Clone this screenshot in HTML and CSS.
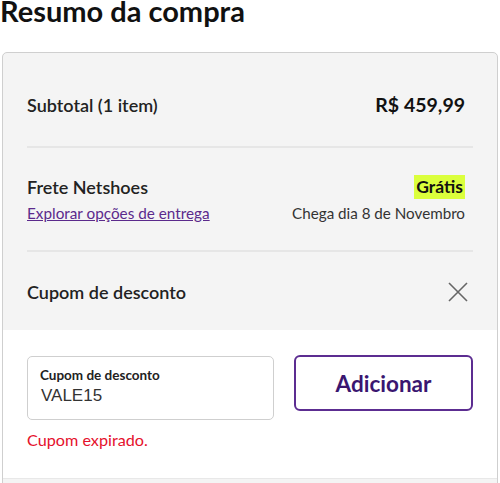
FILE: index.html
```html
<!DOCTYPE html>
<html lang="pt-BR">
<head>
<meta charset="utf-8">
<link rel="stylesheet" href="styles.css">
</head>
<body>
<h1 class="title">Resumo da compra</h1>
<div class="card">
  <div class="section first">
    <div class="row">
      <span class="label">Subtotal (1 item)</span>
      <span class="price">R$ 459,99</span>
    </div>
  </div>
  <div class="section">
    <div class="row">
      <div class="col">
        <span class="label">Frete Netshoes</span>
        <a class="link" href="#">Explorar opções de entrega</a>
      </div>
      <div class="col right">
        <span class="free">Grátis</span>
        <span class="arrive">Chega dia 8 de Novembro</span>
      </div>
    </div>
  </div>
  <div class="section coupon-head">
    <div class="row center">
      <span class="label">Cupom de desconto</span>
      <svg class="close" width="20" height="20" viewBox="0 0 20 20"><path d="M1 1L19 19M19 1L1 19" stroke="#666" stroke-width="1.6" fill="none"/></svg>
    </div>
  </div>
  <div class="coupon-body">
    <div class="coupon-row">
      <div class="field">
        <span class="field-label">Cupom de desconto</span>
        <span class="field-value">VALE15</span>
      </div>
      <button class="btn">Adicionar</button>
    </div>
    <p class="error">Cupom expirado.</p>
  </div>
</div>
</body>
</html>
```
FILE: styles.css
```css
* { box-sizing: border-box; }
body {
  margin: 0;
  background: #fff;
  font-family: Lato, "Noto Sans", sans-serif;
  color: #222;
}
.title {
  margin: 0;
  font-size: 29px;
  line-height: 26px;
  font-weight: 700;
  color: #111;
  position: relative;
  top: -2px;
}
.card {
  margin: 26px 2px 0 2px;
  border: 1px solid #cfcfcf;
  border-radius: 5px;
  background: #f4f4f4;
  height: 440px;
  overflow: hidden;
}
.section {
  margin: 0 24px;
  border-top: 2px solid #e6e6e6;
  padding: 27px 0 25px;
}
.section.first {
  border-top: none;
  padding: 40px 0 29px;
}
.section.coupon-head {
  padding: 28px 0 26px;
}
.row {
  display: flex;
  justify-content: space-between;
  align-items: flex-start;
}
.row.center { align-items: center; }
.col {
  display: flex;
  flex-direction: column;
  gap: 2px;
}
.col.right {
  align-items: flex-end;
  padding-right: 8px;
}
.label {
  font-size: 18px;
  line-height: 24px;
  font-weight: 600;
  color: #222;
}
.price {
  font-size: 19.5px;
  line-height: 24px;
  font-weight: 700;
  color: #111;
  padding-right: 8px;
}
.link {
  font-size: 15.3px;
  line-height: 24px;
  color: #5b2a8c;
  text-decoration: underline;
}
.free {
  font-size: 17.5px;
  line-height: 24px;
  font-weight: 700;
  background: #dbff3c;
  padding: 0 2px;
  color: #111;
}
.arrive {
  font-size: 15.2px;
  line-height: 24px;
  color: #333;
}
.close {
  margin-right: 5px;
}
.coupon-body {
  background: #fff;
  padding: 26px 24px 28px;
  border-bottom: 1px solid #e8e8e8;
}
.coupon-row {
  display: flex;
  gap: 20px;
  align-items: flex-start;
}
.field {
  width: 247px;
  height: 64px;
  border: 1px solid #cfcfcf;
  border-radius: 5px;
  padding: 9px 12px;
  display: flex;
  flex-direction: column;
  background: #fff;
}
.field-label {
  font-size: 13.5px;
  line-height: 18px;
  font-weight: 700;
  color: #222;
}
.field-value {
  font-family: "Liberation Sans", Arial, sans-serif;
  font-size: 17px;
  line-height: 24px;
  color: #333;
  padding-left: 1px;
}
.btn {
  flex: 1;
  height: 56px;
  margin-top: -1px;
  background: #fff;
  border: 2px solid #5c2d91;
  border-radius: 6px;
  font-family: Lato, "Noto Sans", sans-serif;
  font-size: 22.5px;
  font-weight: 700;
  color: #3a1670;
}
.error {
  margin: 10px 0 0;
  font-size: 16.2px;
  line-height: 20px;
  color: #e5102c;
}
```
